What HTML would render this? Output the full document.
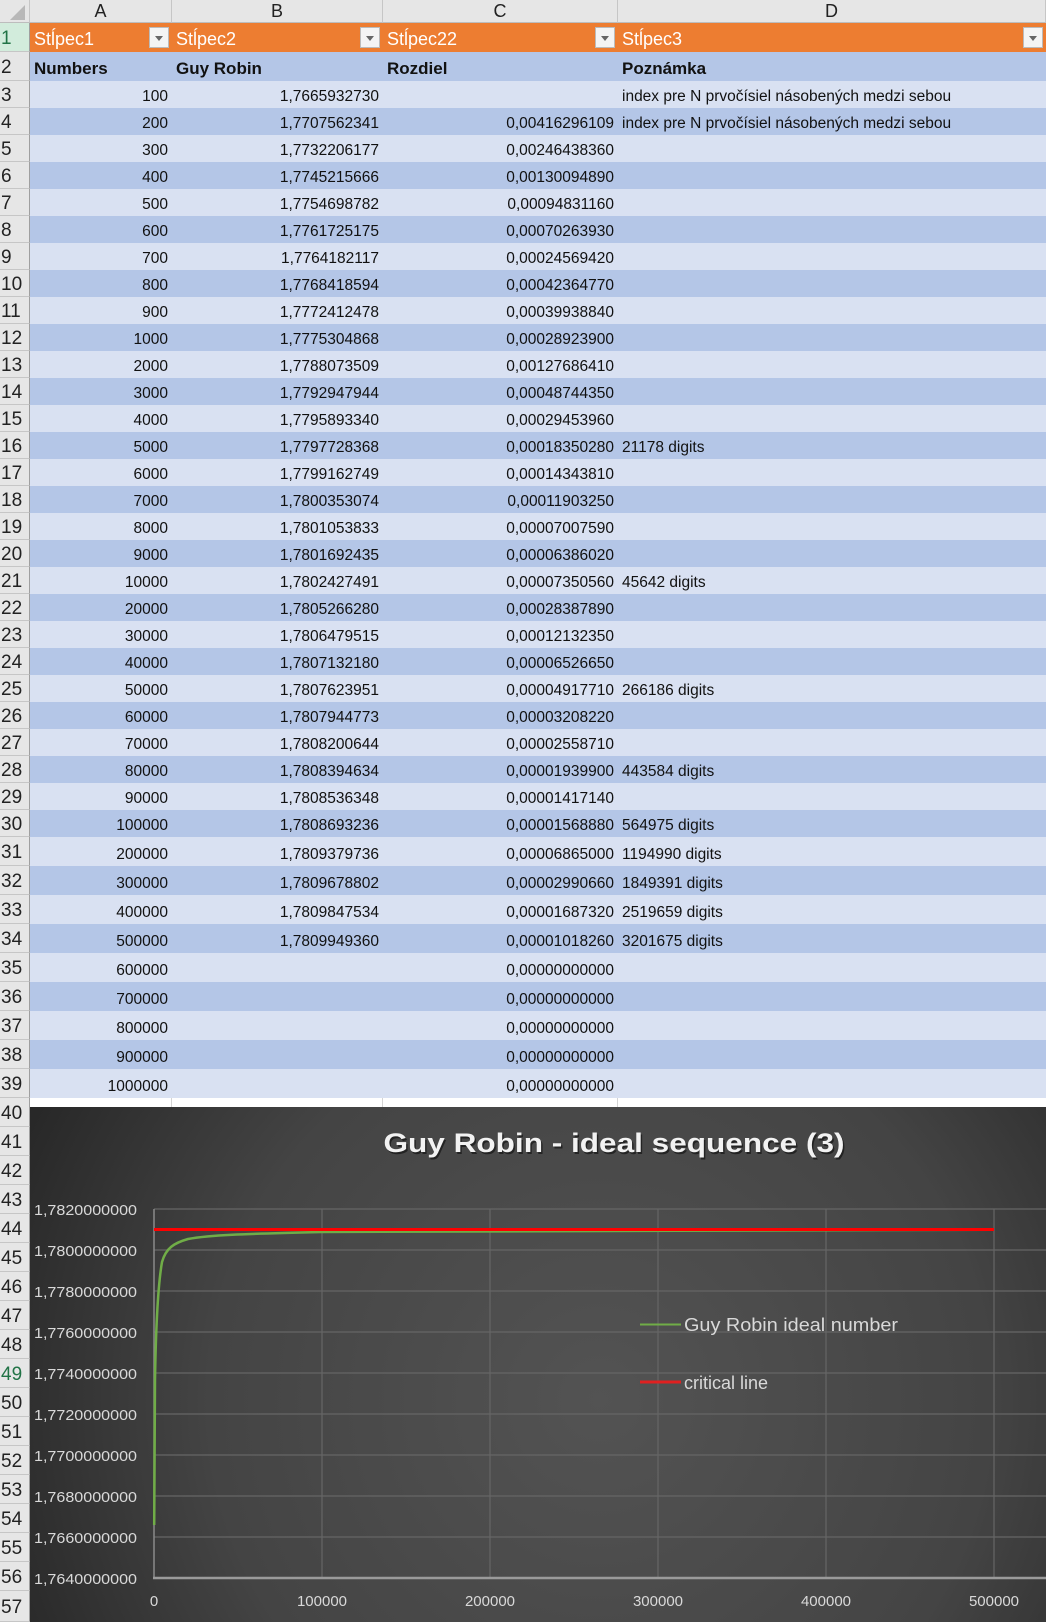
<!DOCTYPE html>
<html><head><meta charset="utf-8"><style>
*{margin:0;padding:0;box-sizing:border-box}
body{width:1046px;height:1622px;overflow:hidden;background:#fff;font-family:"Liberation Sans",sans-serif;position:relative}
.colhdr{position:absolute;top:0;height:23px;background:#e6e6e6;border-right:1px solid #c6c6c6;border-bottom:1px solid #bdbdbd;font-size:18px;color:#222;text-align:center;line-height:23px}
.rowhdr{position:absolute;left:0;width:30px;background:#e6e6e6;border-bottom:1px solid #c6c6c6;border-right:1px solid #9f9f9f;font-size:19px;color:#222;text-align:left;padding-left:1px;padding-top:3px;overflow:hidden;white-space:nowrap}
table{position:absolute;left:30px;top:23px;border-collapse:collapse;table-layout:fixed;width:1016px}
td{font-size:15.5px;color:#111;white-space:nowrap;overflow:hidden;padding:0 4px 2px 4px;vertical-align:bottom}
td.r{text-align:right}
tr.o td{background:#ED7D31;color:#fff;font-size:18px;position:relative}
tr.h td{background:#B4C6E7;font-weight:bold;font-size:17px}
tr.l td{background:#D9E1F2}
tr.d td{background:#B4C6E7}
.fb{position:absolute;right:3px;top:4px;width:20px;height:21px;background:#f4f4f4;border:1px solid #bbb}
.fb:after{content:"";position:absolute;left:5px;top:8px;border-left:4px solid transparent;border-right:4px solid transparent;border-top:5px solid #666}
</style></head><body>
<div class="colhdr" style="left:0;width:30px;background:#e6e6e6"><svg width="30" height="23"><polygon points="25,5 25,20 10,20" fill="#b8b8b8"/></svg></div>
<div class="colhdr" style="left:30px;width:142px">A</div>
<div class="colhdr" style="left:172px;width:211px">B</div>
<div class="colhdr" style="left:383px;width:235px">C</div>
<div class="colhdr" style="left:618px;width:428px">D</div>

<table>
<colgroup><col style="width:142px"><col style="width:211px"><col style="width:235px"><col style="width:428px"></colgroup>
<tr class="o" style="height:29px"><td>Stĺpec1<span class="fb"></span></td><td>Stĺpec2<span class="fb"></span></td><td>Stĺpec22<span class="fb"></span></td><td>Stĺpec3<span class="fb"></span></td></tr>
<tr class="h" style="height:29px"><td>Numbers</td><td>Guy Robin</td><td>Rozdiel</td><td>Poznámka</td></tr>
<tr class="l" style="height:27px"><td class="r">100</td><td class="r">1,7665932730</td><td class="r"></td><td>index pre N prvočísiel násobených medzi sebou</td></tr>
<tr class="d" style="height:27px"><td class="r">200</td><td class="r">1,7707562341</td><td class="r">0,00416296109</td><td>index pre N prvočísiel násobených medzi sebou</td></tr>
<tr class="l" style="height:27px"><td class="r">300</td><td class="r">1,7732206177</td><td class="r">0,00246438360</td><td></td></tr>
<tr class="d" style="height:27px"><td class="r">400</td><td class="r">1,7745215666</td><td class="r">0,00130094890</td><td></td></tr>
<tr class="l" style="height:27px"><td class="r">500</td><td class="r">1,7754698782</td><td class="r">0,00094831160</td><td></td></tr>
<tr class="d" style="height:27px"><td class="r">600</td><td class="r">1,7761725175</td><td class="r">0,00070263930</td><td></td></tr>
<tr class="l" style="height:27px"><td class="r">700</td><td class="r">1,7764182117</td><td class="r">0,00024569420</td><td></td></tr>
<tr class="d" style="height:27px"><td class="r">800</td><td class="r">1,7768418594</td><td class="r">0,00042364770</td><td></td></tr>
<tr class="l" style="height:27px"><td class="r">900</td><td class="r">1,7772412478</td><td class="r">0,00039938840</td><td></td></tr>
<tr class="d" style="height:27px"><td class="r">1000</td><td class="r">1,7775304868</td><td class="r">0,00028923900</td><td></td></tr>
<tr class="l" style="height:27px"><td class="r">2000</td><td class="r">1,7788073509</td><td class="r">0,00127686410</td><td></td></tr>
<tr class="d" style="height:27px"><td class="r">3000</td><td class="r">1,7792947944</td><td class="r">0,00048744350</td><td></td></tr>
<tr class="l" style="height:27px"><td class="r">4000</td><td class="r">1,7795893340</td><td class="r">0,00029453960</td><td></td></tr>
<tr class="d" style="height:27px"><td class="r">5000</td><td class="r">1,7797728368</td><td class="r">0,00018350280</td><td>21178 digits</td></tr>
<tr class="l" style="height:27px"><td class="r">6000</td><td class="r">1,7799162749</td><td class="r">0,00014343810</td><td></td></tr>
<tr class="d" style="height:27px"><td class="r">7000</td><td class="r">1,7800353074</td><td class="r">0,00011903250</td><td></td></tr>
<tr class="l" style="height:27px"><td class="r">8000</td><td class="r">1,7801053833</td><td class="r">0,00007007590</td><td></td></tr>
<tr class="d" style="height:27px"><td class="r">9000</td><td class="r">1,7801692435</td><td class="r">0,00006386020</td><td></td></tr>
<tr class="l" style="height:27px"><td class="r">10000</td><td class="r">1,7802427491</td><td class="r">0,00007350560</td><td>45642 digits</td></tr>
<tr class="d" style="height:27px"><td class="r">20000</td><td class="r">1,7805266280</td><td class="r">0,00028387890</td><td></td></tr>
<tr class="l" style="height:27px"><td class="r">30000</td><td class="r">1,7806479515</td><td class="r">0,00012132350</td><td></td></tr>
<tr class="d" style="height:27px"><td class="r">40000</td><td class="r">1,7807132180</td><td class="r">0,00006526650</td><td></td></tr>
<tr class="l" style="height:27px"><td class="r">50000</td><td class="r">1,7807623951</td><td class="r">0,00004917710</td><td>266186 digits</td></tr>
<tr class="d" style="height:27px"><td class="r">60000</td><td class="r">1,7807944773</td><td class="r">0,00003208220</td><td></td></tr>
<tr class="l" style="height:27px"><td class="r">70000</td><td class="r">1,7808200644</td><td class="r">0,00002558710</td><td></td></tr>
<tr class="d" style="height:27px"><td class="r">80000</td><td class="r">1,7808394634</td><td class="r">0,00001939900</td><td>443584 digits</td></tr>
<tr class="l" style="height:27px"><td class="r">90000</td><td class="r">1,7808536348</td><td class="r">0,00001417140</td><td></td></tr>
<tr class="d" style="height:27px"><td class="r">100000</td><td class="r">1,7808693236</td><td class="r">0,00001568880</td><td>564975 digits</td></tr>
<tr class="l" style="height:29px"><td class="r">200000</td><td class="r">1,7809379736</td><td class="r">0,00006865000</td><td>1194990 digits</td></tr>
<tr class="d" style="height:29px"><td class="r">300000</td><td class="r">1,7809678802</td><td class="r">0,00002990660</td><td>1849391 digits</td></tr>
<tr class="l" style="height:29px"><td class="r">400000</td><td class="r">1,7809847534</td><td class="r">0,00001687320</td><td>2519659 digits</td></tr>
<tr class="d" style="height:29px"><td class="r">500000</td><td class="r">1,7809949360</td><td class="r">0,00001018260</td><td>3201675 digits</td></tr>
<tr class="l" style="height:29px"><td class="r">600000</td><td class="r"></td><td class="r">0,00000000000</td><td></td></tr>
<tr class="d" style="height:29px"><td class="r">700000</td><td class="r"></td><td class="r">0,00000000000</td><td></td></tr>
<tr class="l" style="height:29px"><td class="r">800000</td><td class="r"></td><td class="r">0,00000000000</td><td></td></tr>
<tr class="d" style="height:29px"><td class="r">900000</td><td class="r"></td><td class="r">0,00000000000</td><td></td></tr>
<tr class="l" style="height:29px"><td class="r">1000000</td><td class="r"></td><td class="r">0,00000000000</td><td></td></tr>
</table>
<div style="position:absolute;left:171px;top:1098px;width:1px;height:9px;background:#d4d4d4"></div>
<div style="position:absolute;left:382px;top:1098px;width:1px;height:9px;background:#d4d4d4"></div>
<div style="position:absolute;left:617px;top:1098px;width:1px;height:9px;background:#d4d4d4"></div>

<div class="rowhdr" style="top:23px;height:29px;line-height:26px;background:#d2ecdc;color:#217346">1</div>
<div class="rowhdr" style="top:52px;height:29px;line-height:26px">2</div>
<div class="rowhdr" style="top:81px;height:27px;line-height:24px">3</div>
<div class="rowhdr" style="top:108px;height:27px;line-height:24px">4</div>
<div class="rowhdr" style="top:135px;height:27px;line-height:24px">5</div>
<div class="rowhdr" style="top:162px;height:27px;line-height:24px">6</div>
<div class="rowhdr" style="top:189px;height:27px;line-height:24px">7</div>
<div class="rowhdr" style="top:216px;height:27px;line-height:24px">8</div>
<div class="rowhdr" style="top:243px;height:27px;line-height:24px">9</div>
<div class="rowhdr" style="top:270px;height:27px;line-height:24px">10</div>
<div class="rowhdr" style="top:297px;height:27px;line-height:24px">11</div>
<div class="rowhdr" style="top:324px;height:27px;line-height:24px">12</div>
<div class="rowhdr" style="top:351px;height:27px;line-height:24px">13</div>
<div class="rowhdr" style="top:378px;height:27px;line-height:24px">14</div>
<div class="rowhdr" style="top:405px;height:27px;line-height:24px">15</div>
<div class="rowhdr" style="top:432px;height:27px;line-height:24px">16</div>
<div class="rowhdr" style="top:459px;height:27px;line-height:24px">17</div>
<div class="rowhdr" style="top:486px;height:27px;line-height:24px">18</div>
<div class="rowhdr" style="top:513px;height:27px;line-height:24px">19</div>
<div class="rowhdr" style="top:540px;height:27px;line-height:24px">20</div>
<div class="rowhdr" style="top:567px;height:27px;line-height:24px">21</div>
<div class="rowhdr" style="top:594px;height:27px;line-height:24px">22</div>
<div class="rowhdr" style="top:621px;height:27px;line-height:24px">23</div>
<div class="rowhdr" style="top:648px;height:27px;line-height:24px">24</div>
<div class="rowhdr" style="top:675px;height:27px;line-height:24px">25</div>
<div class="rowhdr" style="top:702px;height:27px;line-height:24px">26</div>
<div class="rowhdr" style="top:729px;height:27px;line-height:24px">27</div>
<div class="rowhdr" style="top:756px;height:27px;line-height:24px">28</div>
<div class="rowhdr" style="top:783px;height:27px;line-height:24px">29</div>
<div class="rowhdr" style="top:810px;height:27px;line-height:24px">30</div>
<div class="rowhdr" style="top:837px;height:29px;line-height:26px">31</div>
<div class="rowhdr" style="top:866px;height:29px;line-height:26px">32</div>
<div class="rowhdr" style="top:895px;height:29px;line-height:26px">33</div>
<div class="rowhdr" style="top:924px;height:29px;line-height:26px">34</div>
<div class="rowhdr" style="top:953px;height:29px;line-height:26px">35</div>
<div class="rowhdr" style="top:982px;height:29px;line-height:26px">36</div>
<div class="rowhdr" style="top:1011px;height:29px;line-height:26px">37</div>
<div class="rowhdr" style="top:1040px;height:29px;line-height:26px">38</div>
<div class="rowhdr" style="top:1069px;height:29px;line-height:26px">39</div>
<div class="rowhdr" style="top:1098px;height:29px;line-height:26px">40</div>
<div class="rowhdr" style="top:1127px;height:29px;line-height:26px">41</div>
<div class="rowhdr" style="top:1156px;height:29px;line-height:26px">42</div>
<div class="rowhdr" style="top:1185px;height:29px;line-height:26px">43</div>
<div class="rowhdr" style="top:1214px;height:29px;line-height:26px">44</div>
<div class="rowhdr" style="top:1243px;height:29px;line-height:26px">45</div>
<div class="rowhdr" style="top:1272px;height:29px;line-height:26px">46</div>
<div class="rowhdr" style="top:1301px;height:29px;line-height:26px">47</div>
<div class="rowhdr" style="top:1330px;height:29px;line-height:26px">48</div>
<div class="rowhdr" style="top:1359px;height:29px;line-height:26px;color:#217346">49</div>
<div class="rowhdr" style="top:1388px;height:29px;line-height:26px">50</div>
<div class="rowhdr" style="top:1417px;height:29px;line-height:26px">51</div>
<div class="rowhdr" style="top:1446px;height:29px;line-height:26px">52</div>
<div class="rowhdr" style="top:1475px;height:29px;line-height:26px">53</div>
<div class="rowhdr" style="top:1504px;height:29px;line-height:26px">54</div>
<div class="rowhdr" style="top:1533px;height:29px;line-height:26px">55</div>
<div class="rowhdr" style="top:1562px;height:29px;line-height:26px">56</div>
<div class="rowhdr" style="top:1591px;height:31px;line-height:28px">57</div>

<svg style="position:absolute;left:0;top:0" width="1046" height="1622" viewBox="0 0 1046 1622">
<defs>
<radialGradient id="bg" cx="600" cy="1400" r="650" gradientUnits="userSpaceOnUse">
<stop offset="0" stop-color="#535353"/><stop offset="0.6" stop-color="#444"/><stop offset="1" stop-color="#262626"/>
</radialGradient>
</defs>
<rect x="30" y="1107" width="1016" height="515" fill="url(#bg)"/>
<g stroke="#666" stroke-width="1.2">
<line x1="154" y1="1209" x2="1046" y2="1209"/>
<line x1="154" y1="1250" x2="1046" y2="1250"/>
<line x1="154" y1="1291" x2="1046" y2="1291"/>
<line x1="154" y1="1332" x2="1046" y2="1332"/>
<line x1="154" y1="1373" x2="1046" y2="1373"/>
<line x1="154" y1="1414" x2="1046" y2="1414"/>
<line x1="154" y1="1455" x2="1046" y2="1455"/>
<line x1="154" y1="1496" x2="1046" y2="1496"/>
<line x1="154" y1="1537" x2="1046" y2="1537"/>
<line x1="322" y1="1209" x2="322" y2="1578"/>
<line x1="490" y1="1209" x2="490" y2="1578"/>
<line x1="658" y1="1209" x2="658" y2="1578"/>
<line x1="826" y1="1209" x2="826" y2="1578"/>
<line x1="994" y1="1209" x2="994" y2="1578"/>
</g>
<line x1="154" y1="1209" x2="154" y2="1578" stroke="#8a8a8a" stroke-width="1.5"/>
<line x1="153" y1="1578" x2="1046" y2="1578" stroke="#9a9a9a" stroke-width="2.5"/>
<path d="M154.2,1525 C154.3,1470 154.4,1420 155,1380 C156,1320 158,1285 162,1262 C166,1248 174,1243 188,1239 C210,1235 240,1234 322,1232 C420,1231 600,1230 994,1229.7" fill="none" stroke="#70AD47" stroke-width="2.5"/>
<line x1="154" y1="1229.5" x2="994" y2="1229.5" stroke="#FF0000" stroke-width="3"/>
<text x="614" y="1152" text-anchor="middle" font-family="Liberation Sans, sans-serif" font-weight="bold" font-size="27" fill="#000" opacity="0.5" textLength="461" lengthAdjust="spacingAndGlyphs" transform="translate(1.5,2)">Guy Robin - ideal sequence (3)</text>
<text x="614" y="1152" text-anchor="middle" font-family="Liberation Sans, sans-serif" font-weight="bold" font-size="27" fill="#f2f2f2" textLength="461" lengthAdjust="spacingAndGlyphs">Guy Robin - ideal sequence (3)</text>
<g font-family="Liberation Sans, sans-serif" font-size="15" fill="#d9d9d9" text-anchor="end">
<text x="137" y="1215" textLength="103" lengthAdjust="spacingAndGlyphs">1,7820000000</text>
<text x="137" y="1256" textLength="103" lengthAdjust="spacingAndGlyphs">1,7800000000</text>
<text x="137" y="1297" textLength="103" lengthAdjust="spacingAndGlyphs">1,7780000000</text>
<text x="137" y="1338" textLength="103" lengthAdjust="spacingAndGlyphs">1,7760000000</text>
<text x="137" y="1379" textLength="103" lengthAdjust="spacingAndGlyphs">1,7740000000</text>
<text x="137" y="1420" textLength="103" lengthAdjust="spacingAndGlyphs">1,7720000000</text>
<text x="137" y="1461" textLength="103" lengthAdjust="spacingAndGlyphs">1,7700000000</text>
<text x="137" y="1502" textLength="103" lengthAdjust="spacingAndGlyphs">1,7680000000</text>
<text x="137" y="1543" textLength="103" lengthAdjust="spacingAndGlyphs">1,7660000000</text>
<text x="137" y="1584" textLength="103" lengthAdjust="spacingAndGlyphs">1,7640000000</text>
</g>
<g font-family="Liberation Sans, sans-serif" font-size="15" fill="#d9d9d9" text-anchor="middle">
<text x="154" y="1606">0</text>
<text x="322" y="1606">100000</text>
<text x="490" y="1606">200000</text>
<text x="658" y="1606">300000</text>
<text x="826" y="1606">400000</text>
<text x="994" y="1606">500000</text>
</g>
<line x1="640" y1="1324.5" x2="681" y2="1324.5" stroke="#70AD47" stroke-width="2"/>
<line x1="640" y1="1382" x2="681" y2="1382" stroke="#E02020" stroke-width="3"/>
<g font-family="Liberation Sans, sans-serif" font-size="18" fill="#d9d9d9">
<text x="684" y="1331" textLength="214" lengthAdjust="spacingAndGlyphs">Guy Robin ideal number</text>
<text x="684" y="1389">critical line</text>
</g>
</svg>
</body></html>
